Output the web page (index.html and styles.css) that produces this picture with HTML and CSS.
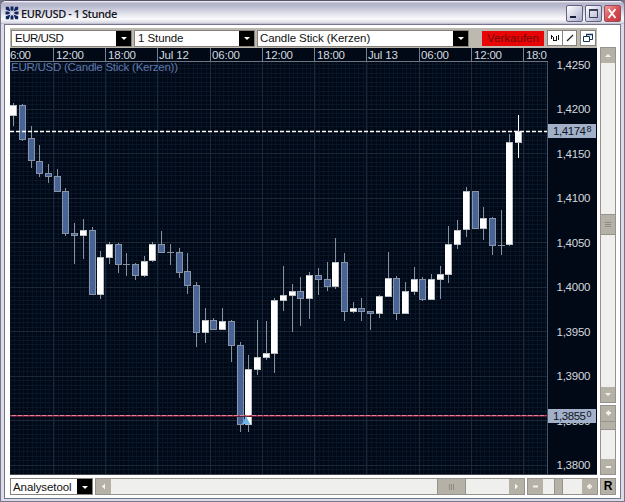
FILE: index.html
```html
<!DOCTYPE html>
<html lang="de">
<head>
<meta charset="utf-8">
<title>EUR/USD - 1 Stunde</title>
<link rel="stylesheet" href="styles.css">
</head>
<body>
<div class="window">
  <header class="titlebar">
    <svg class="logo" width="14" height="14" viewBox="0 0 14 14"><g fill="#10245e"><path id="ray" d="M5.500 .5h3v2.700L7 5.500 5.500 3.200z"/><use href="#ray" transform="rotate(90 7 7)"/><use href="#ray" transform="rotate(180 7 7)"/><use href="#ray" transform="rotate(270 7 7)"/><path id="diag" d="M.8 .8h2.900L5.600 5.600 .8 3.700z"/><use href="#diag" transform="rotate(90 7 7)"/><use href="#diag" transform="rotate(180 7 7)"/><use href="#diag" transform="rotate(270 7 7)"/></g></svg>
    <h1>EUR/USD - 1 Stunde</h1>
    <div class="controls">
      <button class="min"><svg width="15" height="15"><path d="M3 11h6" stroke="#171d38" stroke-width="2"/></svg></button>
      <button><svg width="15" height="15" fill="none" stroke="#39405c"><path d="M3.500 4.500h8v7h-8z"/><path d="M3 4h9" stroke-width="2"/></svg></button>
      <button class="close"><svg width="15" height="15"><path d="M3.500 3l7 9M10.500 3l-7 9" stroke="#fff" stroke-width="1.9"/></svg></button>
    </div>
  </header>
  <main class="content">
    <div class="main-col">
      <div class="toolbar">
        <div class="select pair"><span>EUR/USD</span><i></i></div>
        <div class="select period"><span>1 Stunde</span><i></i></div>
        <div class="select style"><span>Candle Stick (Kerzen)</span><i></i></div>
        <button class="sell">Verkaufen</button>
        <div class="tools">
          <button><svg width="14" height="14" fill="none" stroke="#111"><path d="M3.500 4v4M3 5.500h2M5.500 6v4M8.500 5v5M8 9.500h-2M10.500 4v5"/></svg></button>
          <button><svg width="14" height="14"><path d="M4 10l6-6" stroke="#222" stroke-width="1.300"/></svg></button>
        </div>
        <button class="detach"><svg width="14" height="14" fill="#fff" stroke="#123456"><path d="M5.500 3.500h6v5h-6z"/><path d="M5 3.500h7" stroke-width="1.500"/><path d="M2.500 5.500h6v5h-6z"/></svg></button>
      </div>
      <svg class="chart" id="chart" width="587" height="427" viewBox="10 48 587 427"></svg>
    </div>
    <aside class="side">
      <div class="vscroll">
        <b><svg width="14" height="15"><path d="M4 9l3-3 3 3z"/></svg></b>
        <div class="thumb"></div>
        <b><svg width="14" height="15"><path d="M4 6l3 3 3-3z"/></svg></b>
      </div>
      <div class="vzoom">
        <b><svg width="14" height="15"><path d="M5 6h5v2H5zM6.500 4.500h2v5h-2z"/></svg></b>
        <div class="knob"></div>
        <b><svg width="14" height="15"><path d="M5 7h5v2H5z"/></svg></b>
      </div>
    </aside>
    <footer class="bottom">
      <div class="select analyse"><span>Analysetool</span><i></i></div>
      <div class="hscroll">
        <b><svg width="15" height="15"><path d="M9 4.500l-3 3 3 3z"/></svg></b>
        <div class="thumb"></div>
        <b><svg width="15" height="15"><path d="M6 4.500l3 3-3 3z"/></svg></b>
      </div>
      <div class="hzoom">
        <b><svg width="15" height="15"><path d="M5 6.500h5v2H5z"/></svg></b>
        <div class="knob"></div>
        <b><svg width="15" height="15"><path d="M5 6.500h5v2H5zM6.500 5h2v5h-2z"/></svg></b>
      </div>
      <button class="reset">R</button>
    </footer>
  </main>
</div>
<script src="chart.js"></script>
</body>
</html>
```
FILE: styles.css
```css
* { box-sizing: border-box; }
body { margin: 0; background: #77758c; font: 11.5px "Liberation Sans", Arial, sans-serif; color: #111; }
button { display: block; margin: 0; padding: 0; border: 0; font: inherit; }
svg { display: block; }

.window {
  width: 625px; height: 502px; display: flex; flex-direction: column;
  border: 1px solid #77758c; border-top-color: #55536b; border-radius: 6px 6px 0 0;
  background: #dcdce8; overflow: hidden;
}
.titlebar {
  height: 23px; flex: none; display: flex; align-items: center; padding: 1px 3px 0 4px;
  background: linear-gradient(#fff 0, #b4b4ca 2px, #b9b9ce 5px, #dedeea 12px, #fafafc 18px, #d8d8e4 22px, #aaaabd 23px);
}
.titlebar h1 { margin: 0 0 0 2px; font: 600 11px "Open Sans", sans-serif; letter-spacing: -.45px; color: #171722; }
.controls { display: flex; gap: 2px; margin-left: auto; }
.controls button {
  width: 17px; height: 17px; border: 1px solid #62627f; border-radius: 2px;
  background: linear-gradient(135deg, #fff, #c4c5dc 70%, #a9aac7);
}
.controls .close { background: linear-gradient(135deg, #f0a0a0, #d74a4d 55%, #c13b41); border-color: #9a4b5d; }

.content {
  flex: 1; margin: 0 3px 3px; padding: 3px 5px 3px; border: 1px solid #77758c; background: #fff;
  display: grid; grid-template-columns: 587px 16px; grid-template-rows: 447px 17px; column-gap: 3px; row-gap: 3px;
}
.main-col { display: flex; flex-direction: column; }
.toolbar { height: 20px; background: #bdb9b0; display: flex; align-items: center; padding: 1px; }
.toolbar > * { flex: none; }
.select {
  display: flex; align-items: center; height: 17px; border: 1px solid #85827b; background: #fff; white-space: nowrap;
}
.select span { flex: 1; padding-left: 3px; letter-spacing: -.08px; }
.select i { width: 15px; height: 15px; background: #000; display: grid; place-items: center; }
.select i::after { content: ""; border: 3px solid transparent; border-top-color: #fff; border-bottom: 0; margin-top: 1px; }
.pair { width: 121px; }
.pair span { letter-spacing: -.5px; }
.period { width: 121px; margin-left: 2px; }
.style { width: 212px; margin-left: 2px; }
.style span { padding-left: 2px; }
.sell { width: 62px; height: 15px; margin-left: 13px; background: #e90505; color: #6e0b08; line-height: 15px; }
.tools { display: flex; height: 16px; margin-left: 3px; border: 1px solid #85827b; background: #fff; }
.tools button { width: 14px; background: #fff; }
.tools button + button { border-left: 1px solid #85827b; }
.detach { width: 16px; height: 16px; margin-left: 3px; border: 1px solid #85827b; background: #fff; }

.chart { font: 11.5px "Liberation Sans", Arial, sans-serif; }
.side { display: flex; flex-direction: column; gap: 2px; padding-top: 19px; }
.vscroll, .vzoom, .hscroll, .hzoom { display: flex; background: #efefee; border: 1px solid #96938c; }
.vscroll, .vzoom { flex-direction: column; }
.vscroll { height: 356px; justify-content: space-between; }
.vzoom { flex: 1; }
.hzoom b:last-child { margin-left: auto; }
.vzoom b:last-child { margin-top: auto; }
b { display: block; width: 15px; height: 15px; flex: none; background: #b5b1a7; }
b path { fill: #f4f3ee; }
.vscroll b, .vzoom b { width: 14px; }
.vscroll .thumb { height: 21px; margin-bottom: 2px; border: solid #96938c; border-width: 1px 0; background: repeating-linear-gradient(#8e8b83 0 1px, #b5b1a7 1px 2px) center / 6px 5px no-repeat #b5b1a7; }
.vzoom .knob { height: 9px; background: #b5b1a7; border: solid #96938c; border-width: 1px 0; }

.bottom { grid-column: 1 / 3; display: flex; height: 17px; width: 606px; }
.bottom > * { flex: none; }
.analyse { width: 83px; }
.analyse span { padding-left: 2px; }
.bottom .hscroll { width: 430px; margin-left: 2px; }
.hscroll .thumb { width: 29px; margin: 0 43px 0 auto; border: solid #96938c; border-width: 0 1px; background: repeating-linear-gradient(90deg, #8e8b83 0 1px, #b5b1a7 1px 2px) center / 5px 6px no-repeat #b5b1a7; }
.hzoom { width: 71px; margin-left: 2px; }
.hzoom .knob { width: 9px; margin-left: 11px; background: #b5b1a7; border: solid #96938c; border-width: 0 1px; }
.reset { width: 16px; margin-left: 2px; border: 1px solid #96938c; background: #b5b1a7; font-weight: bold; font-size: 12px; line-height: 15px; color: #000; }
```
FILE: chart.js
```js
// Candles: [high, body top, body bottom, low, rising]
const candles = [
  [103,105,116,126,1],[104,105,140,141,0],[126,138,161,168,0],[145,161,174,177,0],[164,173,177,183,0],
  [169,176,192,192,0],[188,191,234,236,0],[223,233,236,264,0],[219,230,236,259,1],[227,230,295,295,0],
  [251,257,295,299,1],[242,244,258,264,1],[243,244,265,273,0],[253,264,265,276,0],[263,264,276,280,0],
  [256,261,276,277,1],[242,244,261,262,1],[231,244,253,253,0],[244,252,253,265,0],[248,252,273,278,0],
  [253,271,286,294,0],[282,285,333,347,0],[308,320,333,343,1],[318,320,330,330,0],[308,321,330,330,1],
  [320,321,346,362,0],[342,345,425,432,0],[355,369,425,432,1],[320,357,370,375,1],[321,353,358,360,1],
  [298,300,354,373,1],[266,295,301,311,1],[284,291,296,332,1],[277,291,299,326,0],[272,275,299,319,1],
  [268,275,280,295,0],[262,279,287,291,0],[238,262,287,289,1],[253,262,312,321,0],[302,308,312,313,1],
  [298,308,312,321,0],[311,311,314,330,0],[295,296,314,318,1],[252,278,297,297,1],[276,278,314,320,0],
  [282,291,314,314,1],[267,279,292,295,1],[277,279,300,301,0],[274,279,300,300,1],[266,274,280,299,1],
  [226,244,275,283,1],[220,230,245,249,1],[187,191,230,237,1],[191,191,229,229,0],[207,218,229,240,1],
  [217,218,246,255,0],[210,245,246,255,0],[134,142,245,246,1],[115,131,143,158,1]
];
const out = [];
const rect = (x, y, w, h, fill, extra = '') =>
  out.push(`<rect x="${x}" y="${y}" width="${w}" height="${h}" fill="${fill}" ${extra}/>`);
const text = (x, y, w, fill, s) =>
  out.push(`<text x="${x}" y="${y}" fill="${fill}" textLength="${w}">${s}</text>`);

rect(10, 48, 587, 427, '#010917');

// Grid
for (let i = 0; i < 124; i++) rect(Math.round(10 + i * 4.352), 62, 1, 412, '#071427');
for (let i = 0; i < 93; i++) rect(10, Math.round(64 + i * 4.452), 537, 1, '#091729');
for (let i = 0; i < 10; i++) {
  const x = Math.round(53 + i * 52.24);
  rect(x, 62, 1, 412, '#1b2838');
  rect(x, 48, 1, 14, '#77808c');
}
for (let i = 1; i < 10; i++) rect(10, Math.round(64 + i * 44.52), 537, 1, '#1b2838');
rect(10, 61, 538, 1, '#6d7784');
rect(547, 62, 1, 412, '#465260');
rect(10, 474, 587, 1, '#44474d');

// Time axis
text(10, 59, 21, '#d5d9df', '6:00');
[['12:00', 56, 28], ['18:00', 108, 28], ['Jul 12', 159, 30], ['06:00', 212, 28], ['12:00', 265, 28],
 ['18:00', 317, 28], ['Jul 13', 368, 30], ['06:00', 421, 28], ['12:00', 474, 28], ['18:0', 526, 21]]
  .forEach(([s, x, w]) => text(x, 59, w, '#d5d9df', s));
text(11, 71, 167, '#6078ad', 'EUR/USD (Candle Stick (Kerzen))');

// Candles
candles.forEach(([hi, top, bot, lo, up], i) => {
  const x = Math.round(13.2 + i * 8.705);
  rect(x, hi, 1, Math.max(1, lo - hi), i === 58 ? '#fff' : '#87919d');
  const h = bot - top;
  if (h < 2) return rect(x - 3, top, 7, 1, '#87919d');
  rect(x - 3, top, 7, h, up ? '#b9bec3' : '#8793a7');
  rect(x - (up ? 3 : 2), top + 1, up ? 6 : 5, Math.max(1, h - 2), up ? '#fff' : '#486497');
});

// Price lines
out.push('<path d="M10 131.400H547" stroke="#fff" stroke-width="1.500" stroke-dasharray="4 2" shape-rendering="auto"/>');
rect(10, 415, 537, 1, '#c23a5c');
rect(10, 416, 537, 1, '#5c1c34');
for (let x = 12; x < 545; x += 6) rect(x, 415, 4, 1, '#d48a9c');
out.push('<path d="M246 416l4 8h-8z" fill="#6cb5e8" shape-rendering="auto"/>');

// Price axis
['1,4250','1,4200','1,4150','1,4100','1,4050','1,4000','1,3950','1,3900','1,3850','1,3800']
  .forEach((s, i) => text(556.5, 68.8 + i * 44.5, 34, '#d5d9df', s));
[[124, '1,4174', '8'], [409, '1,3855', '0']].forEach(([y, s, n]) => {
  rect(548, y, 48, 14, '#a3b0ca');
  text(553, y + 11, 33, '#101725', s);
  out.push(`<text x="586.500" y="${y + 8}" font-size="9" fill="#101725">${n}</text>`);
});
document.getElementById('chart').innerHTML = `<g shape-rendering="crispEdges">${out.join('')}</g>`;
```
